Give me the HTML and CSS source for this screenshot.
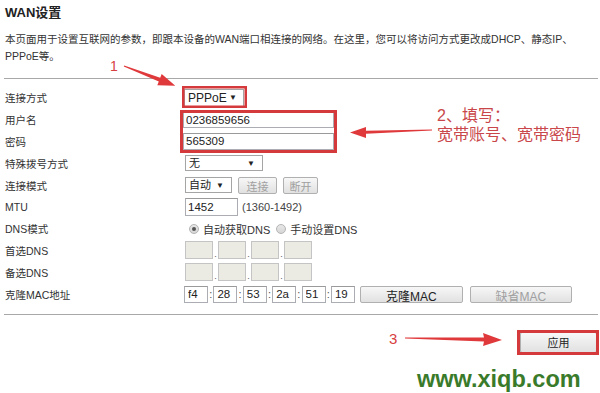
FILE: index.html
```html
<!DOCTYPE html>
<html>
    <head>
        <meta charset="UTF-8" name="viewport" content="width=device-width, initial-scale=1">
        <link rel="stylesheet" href="styles.css">
    </head>
    <body>
        <div class="page">
            <h2 class="title">WAN设置</h2>
            <p class="desc">本页面用于设置互联网的参数，即跟本设备的WAN端口相连接的网络。在这里，您可以将访问方式更改成DHCP、静态IP、<br>PPPoE等。</p>
            <div class="sep"></div>

            <form class="form">
                <div class="row">
                    <label>连接方式</label>
                    <div class="ctl">
                        <span class="sel sel-type"><select><option>PPPoE</option></select></span>
                    </div>
                </div>
                <div class="row">
                    <label>用户名</label>
                    <div class="ctl"><input class="txt txt-long" type="text" value="0236859656"></div>
                </div>
                <div class="row">
                    <label>密码</label>
                    <div class="ctl"><input class="txt txt-long" type="text" value="565309"></div>
                </div>
                <div class="row">
                    <label>特殊拨号方式</label>
                    <div class="ctl">
                        <span class="sel sel-dial"><select><option>无</option></select></span>
                    </div>
                </div>
                <div class="row">
                    <label>连接模式</label>
                    <div class="ctl">
                        <span class="sel sel-mode"><select><option>自动</option></select></span>
                        <button type="button" class="btn btn-conn" disabled>连接</button>
                        <button type="button" class="btn btn-off" disabled>断开</button>
                    </div>
                </div>
                <div class="row">
                    <label>MTU</label>
                    <div class="ctl">
                        <input class="txt txt-mtu" type="text" value="1452">
                        <span class="hint">(1360-1492)</span>
                    </div>
                </div>
                <div class="row">
                    <label>DNS模式</label>
                    <div class="ctl ctl-radio">
                        <span class="radio checked"></span><span class="rtext">自动获取DNS</span>
                        <span class="radio"></span><span class="rtext">手动设置DNS</span>
                    </div>
                </div>
                <div class="row">
                    <label>首选DNS</label>
                    <div class="ctl">
                        <input class="ip" disabled><span class="dot">.</span><input class="ip" disabled><span class="dot">.</span><input class="ip" disabled><span class="dot">.</span><input class="ip" disabled>
                    </div>
                </div>
                <div class="row">
                    <label>备选DNS</label>
                    <div class="ctl">
                        <input class="ip" disabled><span class="dot">.</span><input class="ip" disabled><span class="dot">.</span><input class="ip" disabled><span class="dot">.</span><input class="ip" disabled>
                    </div>
                </div>
                <div class="row">
                    <label>克隆MAC地址</label>
                    <div class="ctl">
                        <input class="txt mac" value="f4"><span class="colon">:</span><input class="txt mac" value="28"><span class="colon">:</span><input class="txt mac" value="53"><span class="colon">:</span><input class="txt mac" value="2a"><span class="colon">:</span><input class="txt mac" value="51"><span class="colon">:</span><input class="txt mac" value="19">
                        <button type="button" class="btn btn-mac">克隆MAC</button>
                        <button type="button" class="btn btn-mac btn-def" disabled>缺省MAC</button>
                    </div>
                </div>
            </form>

            <div class="sep sep-bottom"></div>
            <div class="actions">
                <button type="button" class="btn btn-apply">应用</button>
            </div>

            <!-- annotations drawn over the screenshot -->
            <svg class="marks" width="600" height="393" viewBox="0 0 600 393">
                <rect x="183.25" y="87.25" width="62.5" height="19.5" fill="none" stroke="#d4393b" stroke-width="2.5"/>
                <rect x="181.5" y="111.5" width="154" height="40" fill="none" stroke="#d4393b" stroke-width="3"/>
                <rect x="518.5" y="331.5" width="79" height="22" fill="none" stroke="#d4393b" stroke-width="3"/>
                <polygon fill="#e0393b" points="124.2,65.5 160.2,77.7 161.7,74 175.3,85.7 157.3,85.2 158.8,81.5 123.8,66.5"/>
                <polygon fill="#e0393b" points="432,129.6 366,130.8 366,127 350,132.5 366,138 366,133.8 432,130.6"/>
                <polygon fill="#e0393b" points="405,337.5 484,337.5 483,333 502,340 483,346 484,341.5 405,338.5"/>
            </svg>
            <span class="note note-1">1</span>
            <div class="note note-2">2、填写：<br>宽带账号、宽带密码</div>
            <span class="note note-3">3</span>
            <div class="mark">www.xiqb.com</div>
        </div>
    </body>
</html>
```

FILE: styles.css
```css
* {
    box-sizing: border-box;
}

body {
    margin: 0;
    background: #fff;
    color: #333;
    font-family: "Liberation Sans", "Noto Sans CJK SC", sans-serif;
    font-size: 10.5px;
}

.page {
    position: relative;
    width: 600px;
    height: 393px;
    padding: 0 2px 0 4px;
    overflow: hidden;
}

.title {
    margin: 0;
    padding: 5px 0 0 1px;
    font-size: 13px;
    line-height: 16px;
    font-weight: bold;
    color: #222;
}

.desc {
    margin: 10px 0 0 1px;
    line-height: 17px;
    white-space: nowrap;
}

.sep {
    margin-top: 13px;
    border-top: 1px solid #a8a8a8;
}

/* form rows */
.form {
    margin-top: 8px;
}

.row {
    display: grid;
    grid-template-columns: 180px auto;
    align-items: center;
    height: 21.8px;
    padding-left: 1px;
}

.ctl {
    display: flex;
    align-items: center;
}

.sel {
    position: relative;
    display: inline-block;
}

.sel select {
    appearance: none;
    -webkit-appearance: none;
    display: block;
    height: 17px;
    border: 1px solid #a5a5a5;
    border-radius: 0;
    background: #fff;
    color: #222;
    font: inherit;
    font-size: 11px;
    padding: 0 0 0 3px;
}

.sel::after {
    content: "\25BC";
    position: absolute;
    right: 8px;
    top: 5px;
    font-size: 8px;
    line-height: 8px;
    color: #222;
}

.sel-type {
    margin-left: -1px;
}

.sel-type select {
    width: 60px;
    height: 18px;
    font-size: 12px;
}

.sel-type::after {
    top: 5px;
    right: 7px;
}

.sel-dial select {
    width: 78px;
    height: 16px;
}

.sel-mode select {
    width: 47px;
    height: 16px;
}

.txt {
    height: 17px;
    border: 1px solid #abadb3;
    border-top-color: #9a9a9a;
    padding: 0 2px;
    color: #222;
    font: inherit;
    font-size: 11.5px;
}

.txt-long {
    width: 151px;
    margin-left: -2px;
}

.txt-mtu {
    width: 53px;
    height: 18px;
}

.hint {
    margin-left: 4px;
    font-size: 11px;
    color: #444;
}

.btn {
    height: 17px;
    padding: 0;
    border: 1px solid #b0b0b0;
    border-radius: 2px;
    background: linear-gradient(#f7f7f7, #e1e1e1);
    color: #222;
    font: inherit;
    font-size: 11px;
}

.btn:disabled {
    color: #a0a0a0;
}

.btn-conn {
    width: 39px;
    margin-left: 6px;
}

.btn-off {
    width: 35px;
    margin-left: 6px;
}

.ctl-radio {
    padding-left: 4px;
    font-size: 11px;
}

.radio {
    width: 10px;
    height: 10px;
    border: 1px solid #b4b4b4;
    border-radius: 50%;
    background: linear-gradient(#e8e8e8, #d6d6d6);
    position: relative;
}

.radio.checked::after {
    content: "";
    position: absolute;
    left: 2px;
    top: 2px;
    width: 4px;
    height: 4px;
    border-radius: 50%;
    background: #555;
}

.rtext {
    margin: 0 6px 0 4px;
}

.ip {
    width: 28px;
    height: 18px;
    border: 1px solid #c4c4c4;
    background: #ebebe4;
}

.dot {
    width: 5px;
    align-self: flex-end;
    text-align: center;
    font-size: 9px;
    line-height: 9px;
    color: #555;
}

.mac {
    width: 24px;
    padding: 0 3px;
}

.mac:first-child {
    margin-left: -1px;
}

.colon {
    width: 5.4px;
    text-align: center;
    font-size: 11px;
    color: #555;
}

.btn-mac {
    width: 103px;
    margin-left: 5px;
    font-size: 12px;
}

.btn-def {
    width: 102px;
    margin-left: 7px;
}

.sep-bottom {
    margin-top: 9px;
}

.actions {
    display: flex;
    justify-content: flex-end;
    padding: 17px 1px 0 0;
}

.btn-apply {
    width: 77px;
    height: 21px;
    font-weight: normal;
}

/* red notes on top */
.marks {
    position: absolute;
    left: 0;
    top: 0;
}

.note {
    position: absolute;
    color: #d8403f;
    font-family: "Liberation Sans", "Noto Sans CJK SC", sans-serif;
}

.note-1 {
    left: 110px;
    top: 58px;
    font-size: 14px;
    line-height: 16px;
}

.note-2 {
    left: 437px;
    top: 106px;
    font-size: 16px;
    line-height: 19px;
    color: #c9474a;
}

.note-3 {
    left: 389px;
    top: 330px;
    font-size: 15px;
    line-height: 17px;
}

.mark {
    position: absolute;
    left: 417px;
    top: 368px;
    font-size: 23.5px;
    line-height: 22px;
    font-weight: bold;
    color: #3a7b2b;
}
```
